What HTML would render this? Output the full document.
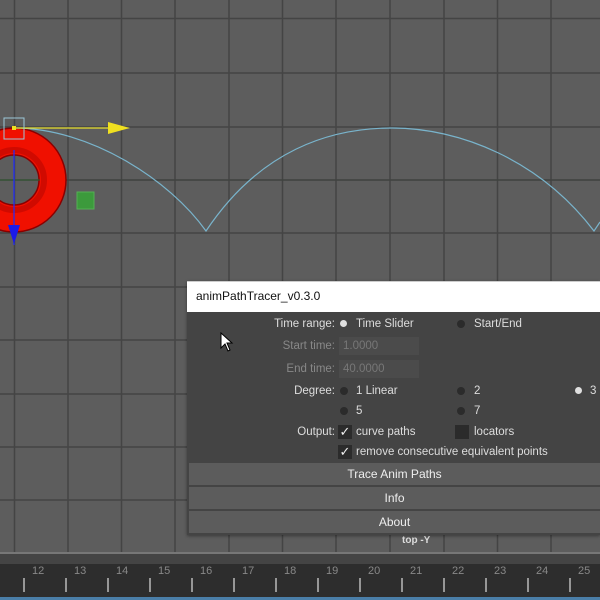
<!DOCTYPE html>
<html><head><style>
body{margin:0;width:600px;height:600px;overflow:hidden;background:#5d5d5d;font-family:"Liberation Sans",sans-serif;position:relative}
.t{position:absolute;font-size:11.5px;color:#ddd;white-space:nowrap}
.r{text-align:right;width:120px}
.dim{color:#888}
.rad{position:absolute;width:8px;height:8px;border-radius:50%;background:#2b2b2b}
.rad.on{background:#e0e0e0;width:7px;height:7px}
.cb{position:absolute;width:14px;height:14px;background:#2b2b2b;color:#eee;font-size:13px;line-height:14px;text-align:center}
.fld{position:absolute;background:#4b4b4b;width:80px;height:18px;font-size:11.5px;color:#777;line-height:18px;padding-left:4px;box-sizing:border-box}
.btn{position:absolute;left:189px;width:411px;height:22px;background:#5c5c5c;color:#eee;font-size:12px;text-align:center;line-height:22px}
</style></head><body>
<svg width="600" height="553" style="position:absolute;left:0;top:0">
<g stroke="#444" stroke-width="1.5">
<line x1="14.5" y1="0" x2="14.5" y2="553"/><line x1="68" y1="0" x2="68" y2="553"/><line x1="121.5" y1="0" x2="121.5" y2="553"/><line x1="175" y1="0" x2="175" y2="553"/><line x1="229" y1="0" x2="229" y2="553"/><line x1="282.5" y1="0" x2="282.5" y2="553"/><line x1="336" y1="0" x2="336" y2="553"/><line x1="390" y1="0" x2="390" y2="553"/><line x1="444" y1="0" x2="444" y2="553"/><line x1="497.5" y1="0" x2="497.5" y2="553"/><line x1="551" y1="0" x2="551" y2="553"/>
<line x1="0" y1="18.5" x2="600" y2="18.5"/><line x1="0" y1="73" x2="600" y2="73"/><line x1="0" y1="127" x2="600" y2="127"/><line x1="0" y1="233" x2="600" y2="233"/><line x1="0" y1="287" x2="600" y2="287"/><line x1="0" y1="340" x2="600" y2="340"/><line x1="0" y1="394" x2="600" y2="394"/><line x1="0" y1="447" x2="600" y2="447"/><line x1="0" y1="500" x2="600" y2="500"/>
</g>
<line x1="0" y1="180" x2="600" y2="180" stroke="#3f423f" stroke-width="1.5"/>
<path d="M14,180 m-52,0 a52,52 0 1,0 104,0 a52,52 0 1,0 -104,0 M14,180 m-25,0 a25,25 0 1,1 50,0 a25,25 0 1,1 -50,0" fill="#f01000" fill-rule="evenodd" stroke="#8a0000" stroke-width="1.5"/>
<circle cx="14" cy="180" r="30" fill="none" stroke="#d00a00" stroke-width="6"/>
<line x1="0" y1="180" x2="40" y2="180" stroke="#2f5a2f" stroke-width="1"/>
<rect x="77" y="192" width="17" height="17" fill="#3c9a3c" stroke="#55b055"/>
<path d="M14,128 C90,128 170,180 206,231 C260,150 330,128 392,128 C460,128 540,160 594,231 L600,222" fill="none" stroke="#79b4cc" stroke-width="1.2"/>
<line x1="14" y1="128" x2="110" y2="128" stroke="#e8e030" stroke-width="1.2"/>
<polygon points="108,122 130,128 108,134" fill="#f0e020"/>
<line x1="14" y1="150" x2="14" y2="245" stroke="#1f2cff" stroke-width="1.2"/>
<polygon points="8,225 20,225 14,244" fill="#1a1ae8"/>
<rect x="4" y="118" width="20" height="21" fill="none" stroke="#9cc6d8" stroke-width="1"/>
<rect x="12" y="126" width="4" height="4" fill="#f0e020"/>
</svg>
<div style="position:absolute;left:0;top:552px;width:600px;height:2px;background:#777"></div>
<div style="position:absolute;left:0;top:554px;width:600px;height:10px;background:#444"></div>
<div style="position:absolute;left:0;top:564px;width:600px;height:33px;background:#2d2d2d"></div>
<div style="position:absolute;left:0;top:597px;width:600px;height:3px;background:#4a7ea8"></div>
<div style="position:absolute;left:0;top:564px;width:600px;height:33px;font-size:11px;color:#888">
<span style="position:absolute;left:32px;top:1px">12</span><span style="position:absolute;left:74px;top:1px">13</span><span style="position:absolute;left:116px;top:1px">14</span><span style="position:absolute;left:158px;top:1px">15</span><span style="position:absolute;left:200px;top:1px">16</span><span style="position:absolute;left:242px;top:1px">17</span><span style="position:absolute;left:284px;top:1px">18</span><span style="position:absolute;left:326px;top:1px">19</span><span style="position:absolute;left:368px;top:1px">20</span><span style="position:absolute;left:410px;top:1px">21</span><span style="position:absolute;left:452px;top:1px">22</span><span style="position:absolute;left:494px;top:1px">23</span><span style="position:absolute;left:536px;top:1px">24</span><span style="position:absolute;left:578px;top:1px">25</span>
<svg width="600" height="33" style="position:absolute;left:0;top:0"><g stroke="#bbb" stroke-width="1.5">
<line x1="24" y1="14" x2="24" y2="28"/><line x1="66" y1="14" x2="66" y2="28"/><line x1="108" y1="14" x2="108" y2="28"/><line x1="150" y1="14" x2="150" y2="28"/><line x1="192" y1="14" x2="192" y2="28"/><line x1="234" y1="14" x2="234" y2="28"/><line x1="276" y1="14" x2="276" y2="28"/><line x1="318" y1="14" x2="318" y2="28"/><line x1="360" y1="14" x2="360" y2="28"/><line x1="402" y1="14" x2="402" y2="28"/><line x1="444" y1="14" x2="444" y2="28"/><line x1="486" y1="14" x2="486" y2="28"/><line x1="528" y1="14" x2="528" y2="28"/><line x1="570" y1="14" x2="570" y2="28"/></g></svg>
</div>
<div class="t" style="left:402px;top:535px;font-size:10px;font-weight:bold;color:#ddd">top -Y</div>
<div style="position:absolute;left:187px;top:281px;width:413px;height:254px;background:#444;box-shadow:0 1px 3px rgba(0,0,0,.4)"></div>
<div style="position:absolute;left:187px;top:281px;width:413px;height:31px;background:#fff;border-top:1px solid #ccc;box-sizing:border-box"></div>
<div class="t" style="left:196px;top:289px;color:#111;font-size:12px">animPathTracer_v0.3.0</div>
<svg width="14" height="22" style="position:absolute;left:220px;top:332px"><path d="M1,1 L1,16 L5,12 L8,19 L10,18 L7,11 L12,11 Z" fill="#fff" stroke="#000" stroke-width="1"/></svg>
<div class="t r" style="left:215px;top:318px">Time range:</div>
<div class="rad on" style="left:340px;top:320px"></div><div class="t" style="left:356px;top:318px">Time Slider</div>
<div class="rad" style="left:457px;top:320px"></div><div class="t" style="left:474px;top:318px">Start/End</div>
<div class="t r dim" style="left:215px;top:340px">Start time:</div><div class="fld" style="left:339px;top:337px">1.0000</div>
<div class="t r dim" style="left:215px;top:363px">End time:</div><div class="fld" style="left:339px;top:360px">40.0000</div>
<div class="t r" style="left:215px;top:385px">Degree:</div>
<div class="rad" style="left:340px;top:387px"></div><div class="t" style="left:356px;top:385px">1 Linear</div>
<div class="rad" style="left:457px;top:387px"></div><div class="t" style="left:474px;top:385px">2</div>
<div class="rad on" style="left:575px;top:387px"></div><div class="t" style="left:590px;top:385px">3</div>
<div class="rad" style="left:340px;top:407px"></div><div class="t" style="left:356px;top:405px">5</div>
<div class="rad" style="left:457px;top:407px"></div><div class="t" style="left:474px;top:405px">7</div>
<div class="t r" style="left:215px;top:426px">Output:</div>
<div class="cb" style="left:338px;top:425px">✓</div><div class="t" style="left:356px;top:426px">curve paths</div>
<div class="cb" style="left:455px;top:425px"></div><div class="t" style="left:474px;top:426px">locators</div>
<div class="cb" style="left:338px;top:445px">✓</div><div class="t" style="left:356px;top:446px">remove consecutive equivalent points</div>
<div class="btn" style="top:463px">Trace Anim Paths</div>
<div class="btn" style="top:487px">Info</div>
<div class="btn" style="top:511px">About</div>
</body></html>
